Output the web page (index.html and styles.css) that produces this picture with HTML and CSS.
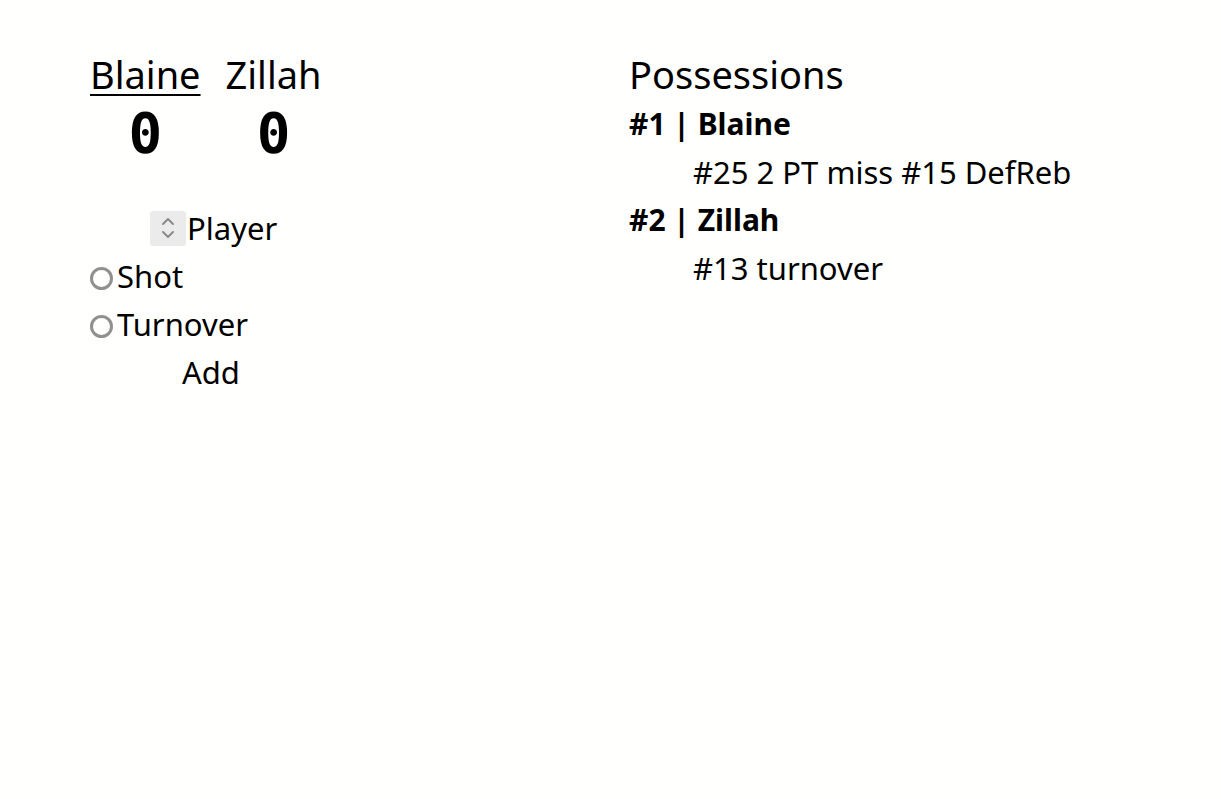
FILE: index.html
```html
<!DOCTYPE html>
<html>
<head>
<meta charset="utf-8">
<link rel="stylesheet" href="styles.css">
</head>
<body>
<div class="page">
  <section class="entry">
    <div class="teams">
      <div class="team">
        <div class="name selected">Blaine</div>
        <div class="score">0</div>
      </div>
      <div class="team">
        <div class="name">Zillah</div>
        <div class="score">0</div>
      </div>
    </div>
    <form class="form">
      <div class="row player-row">
        <span class="select">
          <svg width="16" height="28" viewBox="0 0 16 28"><path d="M3 10 L8 5 L13 10 M3 18 L8 23 L13 18" fill="none" stroke="#8a8a8a" stroke-width="2" stroke-linecap="round" stroke-linejoin="round"/></svg>
        </span>
        <span>Player</span>
      </div>
      <label class="row"><span class="radio"></span><span>Shot</span></label>
      <label class="row"><span class="radio"></span><span>Turnover</span></label>
      <div class="row add-row"><span class="add">Add</span></div>
    </form>
  </section>
  <section class="possessions">
    <h1 class="title">Possessions</h1>
    <div class="poss">
      <div class="poss-head">#1 | Blaine</div>
      <div class="poss-item">#25 2 PT miss #15 DefReb</div>
    </div>
    <div class="poss">
      <div class="poss-head">#2 | Zillah</div>
      <div class="poss-item">#13 turnover</div>
    </div>
  </section>
</div>
</body>
</html>
```
FILE: styles.css
```css
html, body {
  margin: 0;
  background: #fffffd;
}
body {
  font-family: "Noto Sans", "DejaVu Sans", sans-serif;
  font-size: 31px;
  color: #000;
}
.page {
  display: grid;
  grid-template-columns: 539px 1fr;
  padding: 50px 0 0 90px;
}
.teams {
  display: flex;
  gap: 25px;
}
.team {
  display: flex;
  flex-direction: column;
  align-items: center;
}
.name {
  font-size: 38px;
  line-height: 48px;
}
.name.selected {
  text-decoration: underline;
  text-decoration-thickness: 2px;
  text-underline-offset: 5px;
}
.score {
  font-family: "DejaVu Sans Mono", monospace;
  font-weight: bold;
  font-size: 56px;
  line-height: 70px;
}
.form {
  margin-top: 36px;
}
.row {
  display: flex;
  align-items: center;
  height: 48px;
}
.player-row {
  padding-left: 60px;
}
.select {
  flex-shrink: 0;
  width: 36px;
  height: 35px;
  background: #ebebeb;
  border-radius: 3px;
  display: flex;
  align-items: center;
  justify-content: center;
  margin-right: 1px;
}
.radio {
  flex-shrink: 0;
  box-sizing: border-box;
  width: 23px;
  height: 23px;
  border: 3px solid #909090;
  border-radius: 50%;
  margin: 4px 4px 0 0;
}
.add-row {
  padding-left: 92px;
}
.title {
  font-size: 38px;
  font-weight: normal;
  line-height: 48px;
  margin: 0 0 2px;
}
.poss-head {
  font-weight: bold;
  font-size: 30px;
  line-height: 48px;
}
.poss-item {
  line-height: 48px;
  padding-left: 64px;
}
```
